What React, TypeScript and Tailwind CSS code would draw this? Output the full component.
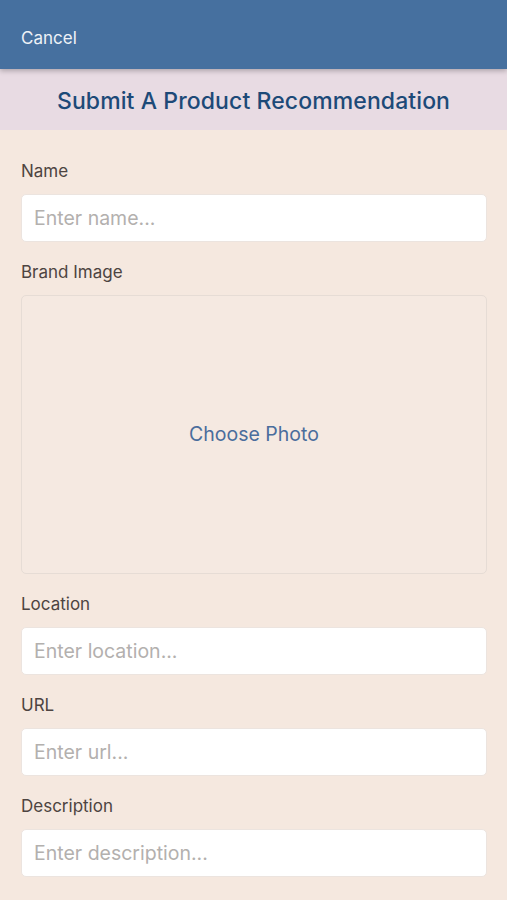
import React from "react";

function Field({ label, placeholder }: { label: string; placeholder: string }) {
  return (
    <div>
      <label className="block text-[17px] leading-[20px] text-[#4d4441]">{label}</label>
      <input
        placeholder={placeholder}
        className="mt-[13px] block h-[48px] w-full rounded-[5px] border border-[#ece4df] bg-white px-[12px] text-[19.5px] text-[#333] placeholder:text-[#b3b0ae] outline-none"
      />
    </div>
  );
}

export default function App() {
  return (
    <div className="min-h-[900px] bg-[#f5e8df]" style={{ fontFamily: "Inter, 'Liberation Sans', sans-serif" }}>
      <header className="relative z-10 flex h-[69px] items-center bg-[#46709f] px-[21px] pt-[8px] shadow-[0_2px_5px_rgba(0,0,0,0.25)]">
        <button className="text-[17px] text-[#eef2f7]">Cancel</button>
      </header>
      <div className="flex h-[61px] items-center justify-center bg-[#e8dbe3] pt-[3px]">
        <h1 className="text-[23px] font-medium tracking-[0.1px] text-[#1d4a78]">Submit A Product Recommendation</h1>
      </div>
      <main className="flex flex-col gap-[20px] pl-[21px] pr-[20px] pt-[31px]">
        <Field label="Name" placeholder="Enter name..." />
        <div>
          <label className="block text-[17px] leading-[20px] text-[#4d4441]">Brand Image</label>
          <button className="mt-[13px] flex h-[279px] w-full items-center justify-center rounded-[5px] border border-[#e6dcd5] bg-[#f5e9e1] text-[19.5px] text-[#4a6d9c]">
            Choose Photo
          </button>
        </div>
        <Field label="Location" placeholder="Enter location..." />
        <Field label="URL" placeholder="Enter url..." />
        <Field label="Description" placeholder="Enter description..." />
      </main>
    </div>
  );
}
